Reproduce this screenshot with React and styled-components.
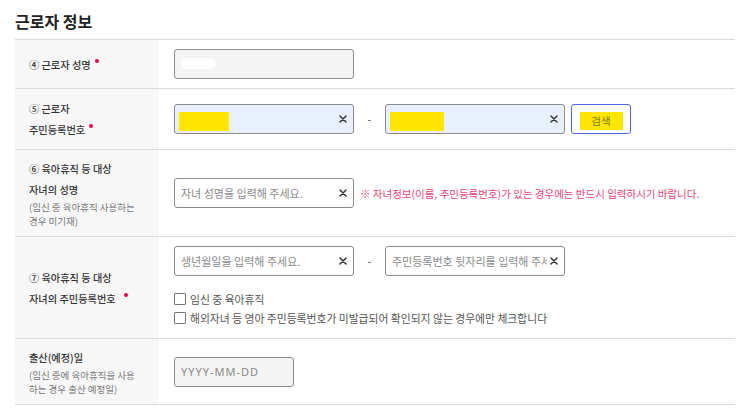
import React from 'react'
import styled, { createGlobalStyle } from 'styled-components'

const GlobalStyle = createGlobalStyle`
  body {
    margin: 0;
    background: #fff;
    font-family: "Noto Sans CJK KR", "Noto Sans", sans-serif;
    color: #333;
  }
`

const Page = styled.div`
  padding: 0 10px 0 15px;
`

const Title = styled.h2`
  margin: 0;
  height: 39px;
  box-sizing: border-box;
  padding-top: 10px;
  font-size: 16px;
  line-height: 22px;
  font-weight: 700;
  color: #222;
`

const Table = styled.div`
  border-top: 1px solid #dcdcdc;
`

const Row = styled.div`
  display: grid;
  grid-template-columns: 144px 1fr;
  height: ${p => (p.$h ? `${p.$h}px` : 'auto')};
  border-bottom: 1px solid #dcdcdc;
`

const LabelCell = styled.div`
  background: #f7f7f7;
  padding-left: 14px;
  display: flex;
  flex-direction: column;
  justify-content: center;
`

const LabelLine = styled.div`
  font-size: 10.2px;
  line-height: 21px;
  font-weight: 500;
  color: #333;
  white-space: nowrap;
`

const SubNote = styled.div`
  font-size: 9.5px;
  line-height: 13.5px;
  color: #777;
  margin-top: 1px;
  white-space: nowrap;
`

const Required = styled.span`
  display: inline-block;
  width: 4px;
  height: 4px;
  border-radius: 50%;
  background: #e2004a;
  margin-left: ${p => p.$gap || 4}px;
  vertical-align: 6px;
`

const FieldCell = styled.div`
  padding: ${p => (p.$top ? '9px 0 11px 15px' : '0 0 0 15px')};
  display: flex;
  flex-direction: column;
  justify-content: ${p => (p.$top ? 'flex-start' : 'center')};
`

const FieldLine = styled.div`
  display: flex;
  align-items: center;
`

const Box = styled.div`
  box-sizing: border-box;
  width: ${p => p.$w || 180}px;
  height: 30px;
  border: 1px solid #8a8a8a;
  border-radius: 3px;
  background: ${p => p.$bg || '#fff'};
  display: flex;
  align-items: center;
  padding: 0 6px;
  overflow: hidden;
`

const Placeholder = styled.span`
  flex: 1;
  min-width: 0;
  overflow: hidden;
  white-space: nowrap;
  font-size: 11px;
  letter-spacing: ${p => (p.$latin ? '1px' : '0')};
  color: #8a8a8a;
  font-family: ${p => (p.$latin ? '"Noto Sans", sans-serif' : 'inherit')};
`

const Redact = styled.span`
  display: block;
  width: ${p => p.$w}px;
  height: 19px;
  margin: 5px 0 0 -2px;
  background: #ffe600;
`

const Pill = styled.span`
  display: block;
  width: 35px;
  height: 11px;
  border-radius: 6px;
  background: #fff;
  margin-top: -2px;
`

const Spacer = styled.span`
  flex: 1;
`

const Dash = styled.span`
  width: 31px;
  text-align: center;
  font-size: 11px;
  color: #555;
`

const SearchButton = styled.button`
  box-sizing: border-box;
  width: 60px;
  height: 30px;
  margin-left: 6px;
  border: 1px solid #4f68e6;
  border-radius: 3px;
  background: #fff;
  padding: 0;
  display: flex;
  align-items: center;
  justify-content: center;
  font-family: inherit;
  cursor: pointer;
`

const ButtonMark = styled.span`
  display: flex;
  align-items: center;
  justify-content: center;
  width: 43px;
  height: 18px;
  margin-top: 3px;
  background: #ffe600;
  font-size: 10.5px;
  color: #7d7a2c;
`

const Notice = styled.span`
  margin-left: 6px;
  font-size: 10.5px;
  color: #e6457a;
  white-space: nowrap;
`

const CheckList = styled.div`
  margin-top: 13px;
`

const CheckRow = styled.label`
  display: flex;
  align-items: center;
  height: 19px;
  font-size: 10.8px;
  color: #555;
  white-space: nowrap;
`

const CheckBox = styled.span`
  box-sizing: border-box;
  width: 12px;
  height: 12px;
  border: 1px solid #777;
  border-radius: 1px;
  background: #fff;
  margin-right: 4px;
  flex-shrink: 0;
`

const ClearIcon = () => (
  <svg width="8" height="8" viewBox="0 0 8 8" style={{ flexShrink: 0, marginLeft: 3 }}>
    <path d="M1 1 L7 7 M7 1 L1 7" stroke="#333" strokeWidth="1.5" strokeLinecap="round" />
  </svg>
)

const TextField = ({ text, bg, w, latin, children, clear = true }) => (
  <Box $bg={bg} $w={w}>
    {children}
    {text ? <Placeholder $latin={latin}>{text}</Placeholder> : <Spacer />}
    {clear && <ClearIcon />}
  </Box>
)

export default function App() {
  return (
    <>
      <GlobalStyle />
      <Page>
        <Title>근로자 정보</Title>
        <Table>
          <Row $h={48}>
            <LabelCell>
              <LabelLine>
                ④ 근로자 성명<Required />
              </LabelLine>
            </LabelCell>
            <FieldCell>
              <FieldLine>
                <TextField bg="#f4f4f4" clear={false}>
                  <Pill />
                </TextField>
              </FieldLine>
            </FieldCell>
          </Row>

          <Row $h={60}>
            <LabelCell>
              <LabelLine>⑤ 근로자</LabelLine>
              <LabelLine>
                주민등록번호<Required />
              </LabelLine>
            </LabelCell>
            <FieldCell>
              <FieldLine>
                <TextField bg="#e8f0fe">
                  <Redact $w={50} />
                </TextField>
                <Dash>-</Dash>
                <TextField bg="#e8f0fe">
                  <Redact $w={54} />
                </TextField>
                <SearchButton>
                  <ButtonMark>검색</ButtonMark>
                </SearchButton>
              </FieldLine>
            </FieldCell>
          </Row>

          <Row $h={86}>
            <LabelCell>
              <LabelLine>⑥ 육아휴직 등 대상</LabelLine>
              <LabelLine>자녀의 성명</LabelLine>
              <SubNote>
                (임신 중 육아휴직 사용하는
                <br />
                경우 미기재)
              </SubNote>
            </LabelCell>
            <FieldCell>
              <FieldLine>
                <TextField text="자녀 성명을 입력해 주세요." />
                <Notice>※ 자녀정보(이름, 주민등록번호)가 있는 경우에는 반드시 입력하시기 바랍니다.</Notice>
              </FieldLine>
            </FieldCell>
          </Row>

          <Row>
            <LabelCell>
              <LabelLine>⑦ 육아휴직 등 대상</LabelLine>
              <LabelLine>
                자녀의 주민등록번호 <Required $gap={6} />
              </LabelLine>
            </LabelCell>
            <FieldCell $top>
              <FieldLine>
                <TextField text="생년월일을 입력해 주세요." />
                <Dash>-</Dash>
                <TextField text="주민등록번호 뒷자리를 입력해 주세요." />
              </FieldLine>
              <CheckList>
                <CheckRow>
                  <CheckBox />
                  임신 중 육아휴직
                </CheckRow>
                <CheckRow>
                  <CheckBox />
                  해외자녀 등 영아 주민등록번호가 미발급되어 확인되지 않는 경우에만 체크합니다
                </CheckRow>
              </CheckList>
            </FieldCell>
          </Row>

          <Row $h={65}>
            <LabelCell>
              <LabelLine>출산(예정)일</LabelLine>
              <SubNote>
                (임신 중에 육아휴직을 사용
                <br />
                하는 경우 출산 예정일)
              </SubNote>
            </LabelCell>
            <FieldCell>
              <FieldLine>
                <TextField text="YYYY-MM-DD" bg="#f4f4f4" w={120} latin clear={false} />
              </FieldLine>
            </FieldCell>
          </Row>
        </Table>
      </Page>
    </>
  )
}
